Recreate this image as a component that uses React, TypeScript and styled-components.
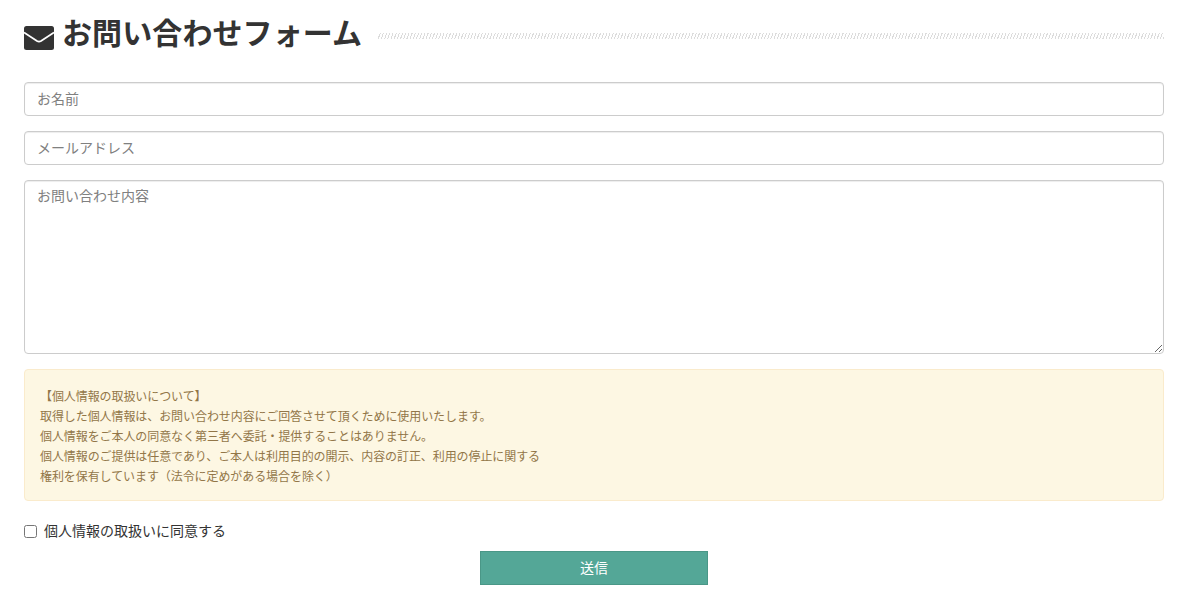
import * as React from 'react';
import styled, { createGlobalStyle } from 'styled-components';

const GlobalStyle = createGlobalStyle`
  html, body {
    margin: 0;
    padding: 0;
    background: #fff;
    color: #333;
    font-family: "Liberation Sans", "Noto Sans CJK JP", sans-serif;
    font-size: 14px;
  }
  * { box-sizing: border-box; }
`;

const Page = styled.div`
  width: 1196px;
  height: 599px;
  overflow: hidden;
  padding: 14px 32px 0 24px;
`;

const TitleRow = styled.div`
  display: flex;
  align-items: center;
  height: 40px;
  margin-bottom: 28px;
`;

const TitleIcon = styled.svg`
  width: 30px;
  height: 24px;
  margin: 8px 8px 0 0;
  flex: none;
`;

const Title = styled.h1`
  margin: 0 16px 0 0;
  font-size: 30px;
  font-weight: 700;
  line-height: 40px;
  letter-spacing: 0.1px;
  color: #333;
  white-space: nowrap;
`;

const Stripe = styled.div`
  flex: 1;
  height: 6px;
  margin-top: 3px;
  background: repeating-linear-gradient(-70deg, #dcdcdc 0 1px, #fff 1px 3px);
`;

const Form = styled.form`
  display: flex;
  flex-direction: column;
`;

const fieldStyles = `
  display: block;
  width: 100%;
  border: 1px solid #ccc;
  border-radius: 4px;
  box-shadow: inset 0 1px 1px rgba(0, 0, 0, 0.075);
  background: #fff;
  color: #555;
  font-family: inherit;
  font-size: 14px;
  padding: 6px 12px;
  line-height: 20px;
  margin-bottom: 15px;
  &::placeholder { color: #808080; opacity: 1; }
`;

const Input = styled.input`
  ${fieldStyles}
  height: 34px;
`;

const TextArea = styled.textarea`
  ${fieldStyles}
  height: 174px;
  padding-top: 5px;
`;

const Notice = styled.div`
  height: 132px;
  padding: 17px 15px 14px;
  background: #fdf7e3;
  border: 1px solid #faebcc;
  border-radius: 4px;
  color: #927648;
  font-size: 12px;
  line-height: 20px;
  letter-spacing: -0.08px;
  margin-bottom: 20px;
`;

const NoticeLine = styled.div`
  white-space: nowrap;
`;

const AgreeLabel = styled.label`
  display: flex;
  align-items: center;
  height: 20px;
  gap: 7px;
  color: #333;
  font-size: 14px;
  line-height: 18px;
`;

const Check = styled.input`
  width: 13px;
  height: 13px;
  margin: 0;
`;

const AgreeText = styled.span`
  margin-top: -1px;
`;

const SubmitRow = styled.div`
  display: flex;
  justify-content: center;
  margin-top: 10px;
`;

const Submit = styled.button`
  width: 228px;
  height: 34px;
  padding: 0 0 2px;
  background: #54a797;
  border: 1px solid #4a9787;
  color: #fff;
  font-family: inherit;
  font-size: 14px;
`;

const noticeLines = [
  '【個人情報の取扱いについて】',
  '取得した個人情報は、お問い合わせ内容にご回答させて頂くために使用いたします。',
  '個人情報をご本人の同意なく第三者へ委託・提供することはありません。',
  '個人情報のご提供は任意であり、ご本人は利用目的の開示、内容の訂正、利用の停止に関する',
  '権利を保有しています（法令に定めがある場合を除く）',
];

const App = () => (
  <Page>
    <GlobalStyle />
    <TitleRow>
      <TitleIcon viewBox="0 0 30 24" aria-hidden="true">
        <rect width="30" height="24" rx="2.5" fill="#333" />
        <path d="M0 6.5 L13 15 Q15 16.2 17 15 L30 6.5" fill="none" stroke="#fff" strokeWidth="1.8" />
      </TitleIcon>
      <Title>お問い合わせフォーム</Title>
      <Stripe />
    </TitleRow>
    <Form>
      <Input placeholder="お名前" />
      <Input placeholder="メールアドレス" />
      <TextArea placeholder="お問い合わせ内容" />
      <Notice>
        {noticeLines.map((line) => (
          <NoticeLine key={line}>{line}</NoticeLine>
        ))}
      </Notice>
      <AgreeLabel>
        <Check type="checkbox" />
        <AgreeText>個人情報の取扱いに同意する</AgreeText>
      </AgreeLabel>
      <SubmitRow>
        <Submit type="button">送信</Submit>
      </SubmitRow>
    </Form>
  </Page>
);

export default App;
